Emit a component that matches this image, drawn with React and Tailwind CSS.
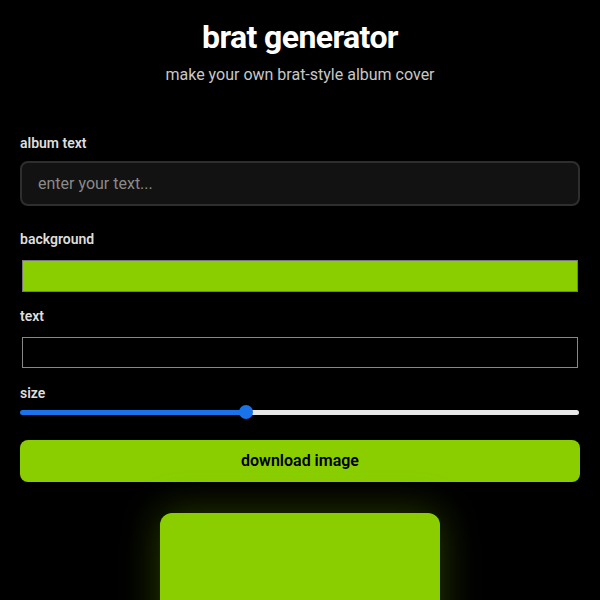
import React from "react";

export default function App() {
  return (
    <div className="min-h-[600px] bg-black px-5 pb-10 font-['Roboto',sans-serif] text-white">
      <h1 className="pt-[18px] text-center text-[32px] font-bold leading-[38px] tracking-[-0.6px] text-white">
        brat generator
      </h1>
      <p className="mt-[7px] text-center text-[16px] leading-[24px] text-[#c8c8c8]">
        make your own brat-style album cover
      </p>

      <label className="mt-[46px] block text-[14px] font-semibold leading-[20px] text-[#dddddd]">
        album text
      </label>
      <input
        type="text"
        placeholder="enter your text..."
        className="mt-2 block h-[45px] w-full rounded-lg border-2 border-[#2e2e2e] bg-[#121212] px-4 text-[16px] text-white outline-none placeholder:text-[#8a8a8a]"
      />

      <label className="mt-[23px] block text-[14px] font-semibold leading-[20px] text-[#dddddd]">
        background
      </label>
      <div className="mx-[2px] mt-[11px] h-[32px] border border-[#777] bg-[#8ace00]" />

      <label className="mt-[14px] block text-[14px] font-semibold leading-[20px] text-[#dddddd]">
        text
      </label>
      <div className="mx-[2px] mt-[11px] h-[31px] border border-[#888] bg-black" />

      <label className="mt-[15px] block text-[14px] font-semibold leading-[20px] text-[#dddddd]">
        size
      </label>
      <div className="relative h-[18px]">
        <div className="absolute left-0 right-[1px] top-[7px] flex h-[5px] overflow-hidden rounded-full">
          <div className="h-full w-[226px] bg-[#1a73e8]" />
          <div className="h-full flex-1 bg-[#e8e8e8]" />
        </div>
        <div className="absolute left-[219px] top-[2px] h-[14px] w-[14px] rounded-full bg-[#1a73e8]" />
      </div>

      <button className="mt-[19px] flex h-[42px] w-full items-center justify-center rounded-lg bg-[#8ace00] text-[16px] font-semibold text-black">
        download image
      </button>

      <div className="mx-auto mt-[31px] h-[280px] w-[280px] rounded-xl bg-[#8ace00] shadow-[0_0_40px_rgba(138,206,0,0.3)]" />
    </div>
  );
}
